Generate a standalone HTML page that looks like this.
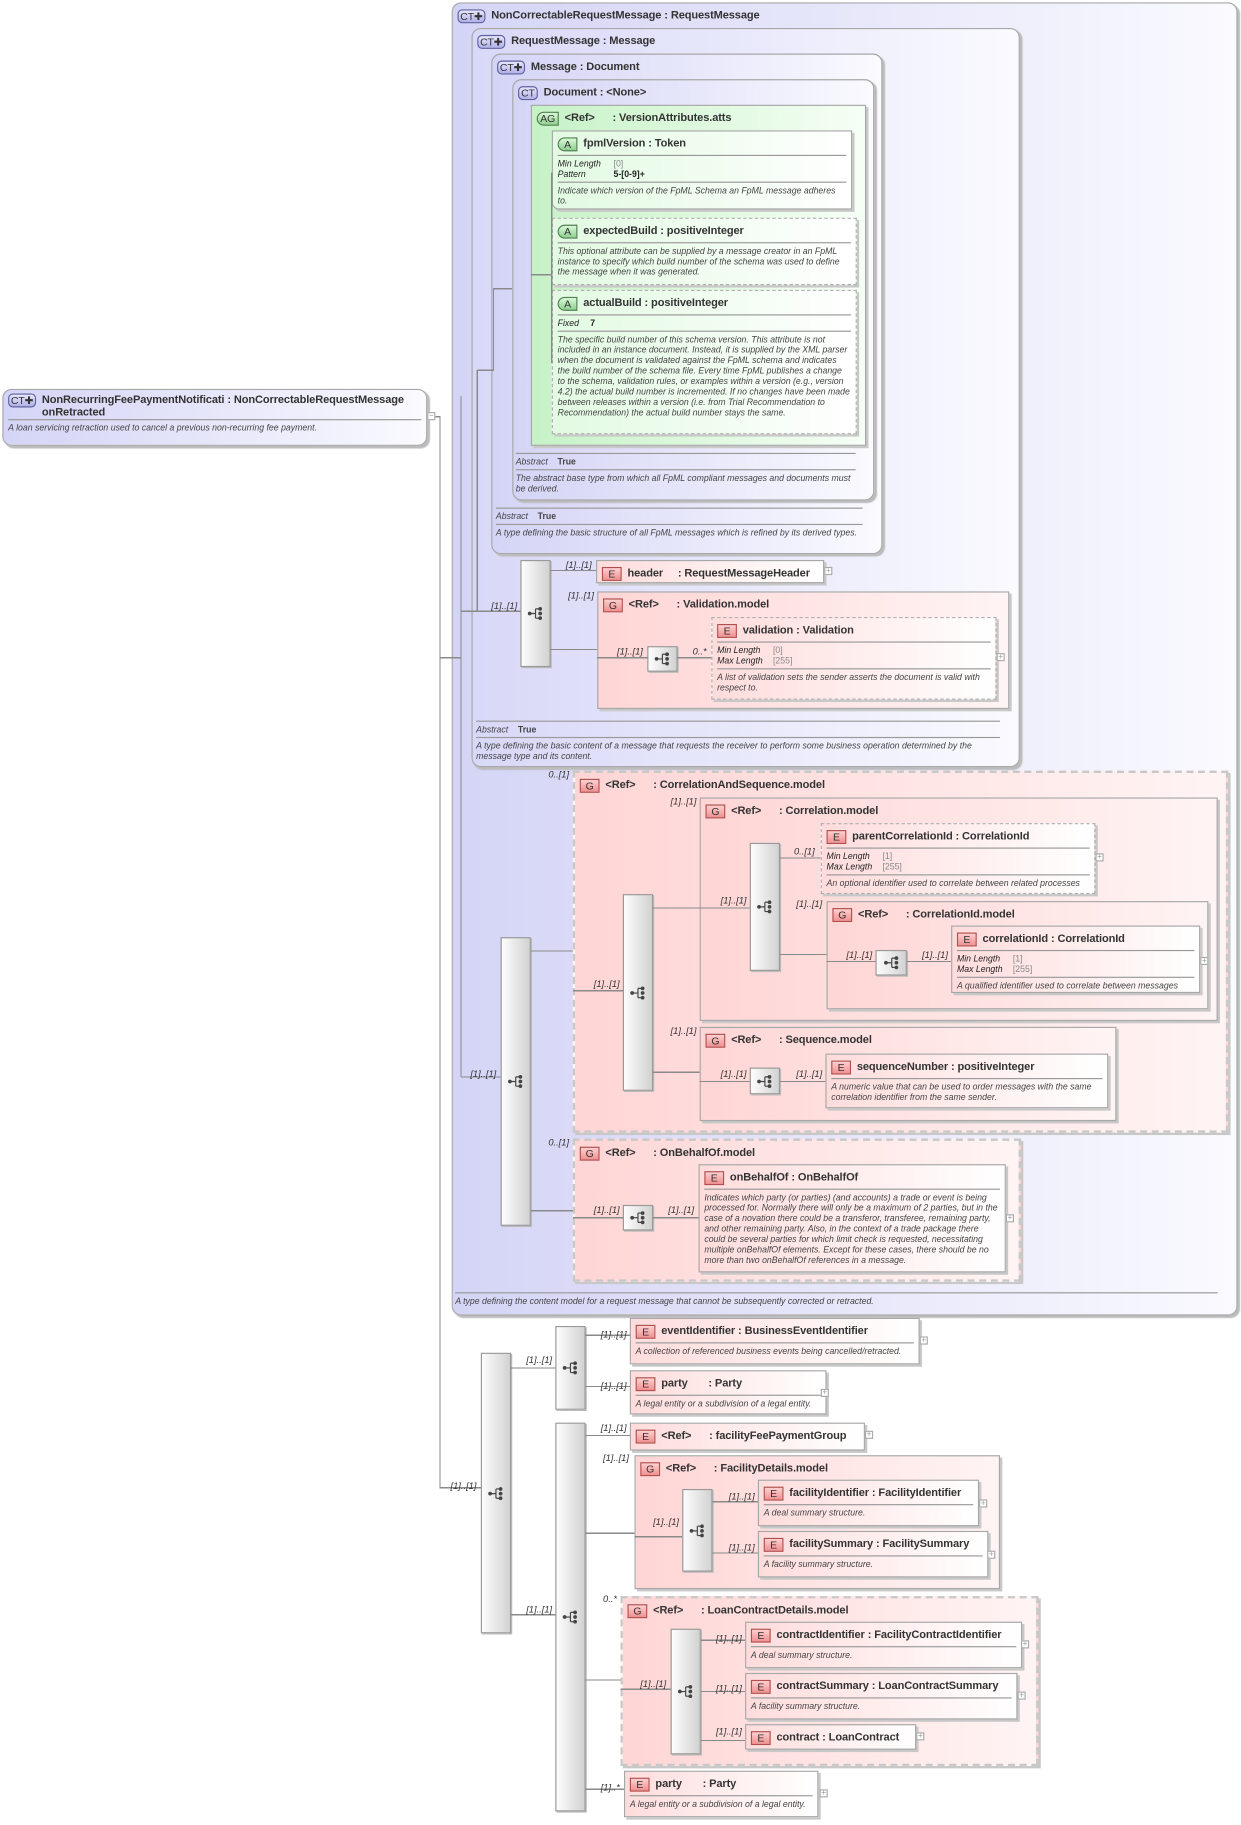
<!DOCTYPE html>
<html><head><meta charset="utf-8">
<style>
html,body{margin:0;padding:0;background:#fff;width:1241px;height:1825px;overflow:hidden}
#w{position:absolute;left:0;top:0;width:1066px;height:1568px;transform:scale(1.16417);transform-origin:0 0;font-family:"Liberation Sans",sans-serif}
.b{position:absolute;box-sizing:border-box;border:1px solid #a8a8a8}
.ct{border-radius:8px;background:linear-gradient(to right,#d4d4f6,#fafaff);box-shadow:2px 2px 1px #bbb}
.g{background:linear-gradient(to right,#ffd5d5,#fff4f4);box-shadow:2px 2px 0 #c8c8c8}
.e{background:linear-gradient(to right,#ffdcdc,#fff);box-shadow:2px 2px 0 #c8c8c8}
.dash{border:1px dashed #b0b0b0}
.ag{background:linear-gradient(to right,#c6f2c6,#f6fff6);box-shadow:2px 2px 0 #c8c8c8}
.at{background:linear-gradient(to right,#e2fae2,#fff);box-shadow:2px 2px 0 #c8c8c8}
.hd{font:bold 9.5px "Liberation Sans",sans-serif;letter-spacing:-0.1px;color:#333;white-space:nowrap;height:17px;line-height:16px;padding:3px 4px 0}
.sep{border-top:1px solid #999;margin:0 4px}
.d{font:italic 7.5px "Liberation Sans",sans-serif;color:#444;line-height:9px;padding:2px 4px}
.p{font:italic 7.5px "Liberation Sans",sans-serif;color:#222;line-height:9px;padding:2px 4px}
.p span{display:inline-block;width:48px}
.p em{font-style:normal;color:#888}
.p b{font-style:normal}
.bd{display:inline-block;box-sizing:border-box;height:12px;line-height:11px;font:9px "Liberation Sans",sans-serif;text-align:center;margin-right:5px;vertical-align:-1px;color:#333}
.bE{width:17px;border:1px solid #b05050;background:linear-gradient(#ffd0d0,#f09090)}
.bA{width:17px;border:1px solid #508050;border-radius:6px 0 0 6px;background:linear-gradient(#d8f8d8,#90d090)}
.bAG{width:19px;border:1px solid #508050;border-radius:6px 0 0 6px;background:linear-gradient(#d8f8d8,#90d090)}
.bCT{width:24px;border:1px solid #6060a0;border-radius:4px;background:linear-gradient(#e8e8ff,#b0b0e8)}
.s{position:absolute;box-sizing:border-box;border:1px solid #999;background:linear-gradient(to right,#fdfdfd,#d2d2d2);box-shadow:1px 1px 0 #bbb}
.s svg{position:absolute;left:50%;top:50%;margin:-6px 0 0 -7px}
.l{position:absolute;font:italic 8px "Liberation Sans",sans-serif;color:#333;white-space:nowrap}
.pl{position:absolute;width:7px;height:7px;box-sizing:border-box;border:1px solid #aaa;background:#fff;font:7px/5px "Liberation Sans";color:#999;text-align:center}
.ft{position:absolute;font:italic 7.5px "Liberation Sans",sans-serif;color:#444;line-height:9px}
.ft hr{border:0;border-top:1px solid #999;margin:0}
</style></head><body><div id="w">
<svg width="0" height="0" style="position:absolute"><defs><g id="ic"><circle cx="2" cy="6" r="1.6" fill="#444"/><line x1="2" y1="6" x2="7" y2="6" stroke="#444"/><line x1="7" y1="2" x2="7" y2="10" stroke="#444"/><line x1="7" y1="2" x2="11" y2="2" stroke="#444"/><line x1="7" y1="10" x2="11" y2="10" stroke="#444"/><circle cx="11" cy="2" r="1.6" fill="#444"/><circle cx="11" cy="6" r="1.6" fill="#444"/><circle cx="11" cy="10" r="1.6" fill="#444"/></g></defs></svg>

<div class="b ct" style="left:388px;top:2px;width:675px;height:1128px"><div class="hd"><i class="bd bCT">CT✚</i>NonCorrectableRequestMessage : RequestMessage</div></div>
<div class="b ct" style="left:405px;top:24px;width:471px;height:635px;background:linear-gradient(to right,#d8d8f8,#fafaff)"><div class="hd"><i class="bd bCT">CT✚</i>RequestMessage : Message</div></div>
<div class="b ct" style="left:422px;top:46px;width:336px;height:430px"><div class="hd"><i class="bd bCT">CT✚</i>Message : Document</div></div>
<div class="b ct" style="left:440px;top:68px;width:311px;height:362px"><div class="hd"><i class="bd bCT" style="width:17px">CT</i>Document : &lt;None&gt;</div></div>
<div class="b ag" style="left:456px;top:90px;width:288px;height:293px;border-radius:0"><div class="hd"><i class="bd bAG">AG</i>&lt;Ref&gt;&nbsp;&nbsp;&nbsp;&nbsp;&nbsp; : VersionAttributes.atts</div></div>
<div class="b at" style="left:474px;top:112px;width:258px;height:68px;border-radius:0 0 0 6px"><div class="hd"><i class="bd bA">A</i>fpmlVersion : Token</div><div class="sep"></div><div class="p"><span>Min Length</span><em>[0]</em><br><span>Pattern</span><b>5-[0-9]+</b></div><div class="sep"></div><div class="d">Indicate which version of the FpML Schema an FpML message adheres to.</div></div>
<div class="b at dash" style="left:474px;top:187px;width:262px;height:58px"><div class="hd"><i class="bd bA">A</i>expectedBuild : positiveInteger</div><div class="sep"></div><div class="d">This optional attribute can be supplied by a message creator in an FpML instance to specify which build number of the schema was used to define the message when it was generated.</div></div>
<div class="b at dash" style="left:474px;top:249px;width:262px;height:124px"><div class="hd"><i class="bd bA">A</i>actualBuild : positiveInteger</div><div class="sep"></div><div class="p"><span style="width:28px">Fixed</span><b>7</b></div><div class="sep"></div><div class="d">The specific build number of this schema version. This attribute is not included in an instance document. Instead, it is supplied by the XML parser when the document is validated against the FpML schema and indicates the build number of the schema file. Every time FpML publishes a change to the schema, validation rules, or examples within a version (e.g., version 4.2) the actual build number is incremented. If no changes have been made between releases within a version (i.e. from Trial Recommendation to Recommendation) the actual build number stays the same.</div></div>

<div class="ft" style="left:443px;top:389px;width:292px"><hr><div style="padding:2px 0"><span>Abstract</span>&nbsp;&nbsp;&nbsp;&nbsp;<b style="font-style:normal">True</b></div><hr><div style="padding-top:2px">The abstract base type from which all FpML compliant messages and documents must be derived.</div></div>
<div class="ft" style="left:426px;top:436px;width:315px"><hr><div style="padding:2px 0"><span>Abstract</span>&nbsp;&nbsp;&nbsp;&nbsp;<b style="font-style:normal">True</b></div><hr><div style="padding-top:2px">A type defining the basic structure of all FpML messages which is refined by its derived types.</div></div>

<div class="s" style="left:447px;top:481px;width:26px;height:92px"><svg width="14" height="12"><use href="#ic"/></svg></div>
<div class="b e" style="left:512px;top:481px;width:196px;height:20px"><div class="hd"><i class="bd bE">E</i>header&nbsp;&nbsp;&nbsp;&nbsp; : RequestMessageHeader</div></div>
<div class="b g" style="left:513px;top:508px;width:354px;height:101px"><div class="hd"><i class="bd bE">G</i>&lt;Ref&gt;&nbsp;&nbsp;&nbsp;&nbsp;&nbsp; : Validation.model</div></div>
<div class="s" style="left:556px;top:555px;width:26px;height:22px"><svg width="14" height="12"><use href="#ic"/></svg></div>
<div class="b e dash" style="left:611px;top:530px;width:245px;height:71px"><div class="hd"><i class="bd bE">E</i>validation : Validation</div><div class="sep"></div><div class="p"><span>Min Length</span><em>[0]</em><br><span>Max Length</span><em>[255]</em></div><div class="sep"></div><div class="d">A list of validation sets the sender asserts the document is valid with respect to.</div></div>
<div class="ft" style="left:409px;top:619px;width:450px"><hr><div style="padding:2px 0"><span>Abstract</span>&nbsp;&nbsp;&nbsp;&nbsp;<b style="font-style:normal">True</b></div><hr><div style="padding-top:2px">A type defining the basic content of a message that requests the receiver to perform some business operation determined by the message type and its content.</div></div>

<div class="s" style="left:430px;top:805px;width:26px;height:248px"><svg width="14" height="12"><use href="#ic"/></svg></div>
<div class="b g dash" style="left:492px;top:662px;width:563px;height:311px;border:2px dashed #c8c8c8"><div class="hd"><i class="bd bE">G</i>&lt;Ref&gt;&nbsp;&nbsp;&nbsp;&nbsp;&nbsp; : CorrelationAndSequence.model</div></div>
<div class="s" style="left:535px;top:768px;width:26px;height:169px"><svg width="14" height="12"><use href="#ic"/></svg></div>
<div class="b g" style="left:601px;top:685px;width:445px;height:192px"><div class="hd"><i class="bd bE">G</i>&lt;Ref&gt;&nbsp;&nbsp;&nbsp;&nbsp;&nbsp; : Correlation.model</div></div>
<div class="s" style="left:644px;top:724px;width:26px;height:110px"><svg width="14" height="12"><use href="#ic"/></svg></div>
<div class="b e dash" style="left:705px;top:707px;width:236px;height:61px"><div class="hd"><i class="bd bE">E</i>parentCorrelationId : CorrelationId</div><div class="sep"></div><div class="p"><span>Min Length</span><em>[1]</em><br><span>Max Length</span><em>[255]</em></div><div class="sep"></div><div class="d">An optional identifier used to correlate between related processes</div></div>
<div class="b g" style="left:710px;top:774px;width:328px;height:93px"><div class="hd"><i class="bd bE">G</i>&lt;Ref&gt;&nbsp;&nbsp;&nbsp;&nbsp;&nbsp; : CorrelationId.model</div></div>
<div class="s" style="left:752px;top:816px;width:27px;height:22px"><svg width="14" height="12"><use href="#ic"/></svg></div>
<div class="b e" style="left:817px;top:795px;width:214px;height:58px"><div class="hd"><i class="bd bE">E</i>correlationId : CorrelationId</div><div class="sep"></div><div class="p"><span>Min Length</span><em>[1]</em><br><span>Max Length</span><em>[255]</em></div><div class="sep"></div><div class="d">A qualified identifier used to correlate between messages</div></div>
<div class="b g" style="left:601px;top:882px;width:358px;height:81px"><div class="hd"><i class="bd bE">G</i>&lt;Ref&gt;&nbsp;&nbsp;&nbsp;&nbsp;&nbsp; : Sequence.model</div></div>
<div class="s" style="left:644px;top:917px;width:26px;height:23px"><svg width="14" height="12"><use href="#ic"/></svg></div>
<div class="b e" style="left:709px;top:905px;width:243px;height:47px"><div class="hd"><i class="bd bE">E</i>sequenceNumber : positiveInteger</div><div class="sep"></div><div class="d">A numeric value that can be used to order messages with the same correlation identifier from the same sender.</div></div>
<div class="b g dash" style="left:492px;top:978px;width:385px;height:123px;border:2px dashed #c8c8c8"><div class="hd"><i class="bd bE">G</i>&lt;Ref&gt;&nbsp;&nbsp;&nbsp;&nbsp;&nbsp; : OnBehalfOf.model</div></div>
<div class="s" style="left:535px;top:1035px;width:26px;height:22px"><svg width="14" height="12"><use href="#ic"/></svg></div>
<div class="b e" style="left:600px;top:1000px;width:264px;height:93px"><div class="hd"><i class="bd bE">E</i>onBehalfOf : OnBehalfOf</div><div class="sep"></div><div class="d">Indicates which party (or parties) (and accounts) a trade or event is being processed for. Normally there will only be a maximum of 2 parties, but in the case of a novation there could be a transferor, transferee, remaining party, and other remaining party. Also, in the context of a trade package there could be several parties for which limit check is requested, necessitating multiple onBehalfOf elements. Except for these cases, there should be no more than two onBehalfOf references in a message.</div></div>
<div class="ft" style="left:391px;top:1110px;width:655px"><hr><div style="padding-top:2px">A type defining the content model for a request message that cannot be subsequently corrected or retracted.</div></div>

<div class="b ct" style="left:2px;top:334px;width:365px;height:49px"><div class="hd" style="line-height:11px;height:22px"><i class="bd bCT" style="vertical-align:top">CT✚</i><span style="display:inline-block;vertical-align:top">NonRecurringFeePaymentNotificati&nbsp;: NonCorrectableRequestMessage<br>onRetracted</span></div><div class="sep"></div><div class="d">A loan servicing retraction used to cancel a previous non-recurring fee payment.</div></div>

<div class="s" style="left:413px;top:1162px;width:26px;height:241px"><svg width="14" height="12"><use href="#ic"/></svg></div>
<div class="s" style="left:477px;top:1139px;width:26px;height:72px"><svg width="14" height="12"><use href="#ic"/></svg></div>
<div class="b e" style="left:541px;top:1132px;width:249px;height:40px"><div class="hd"><i class="bd bE">E</i>eventIdentifier : BusinessEventIdentifier</div><div class="sep"></div><div class="d">A collection of referenced business events being cancelled/retracted.</div></div>
<div class="b e" style="left:541px;top:1177px;width:169px;height:38px"><div class="hd"><i class="bd bE">E</i>party&nbsp;&nbsp;&nbsp;&nbsp;&nbsp;&nbsp; : Party</div><div class="sep"></div><div class="d">A legal entity or a subdivision of a legal entity.</div></div>
<div class="s" style="left:477px;top:1222px;width:26px;height:334px"><svg width="14" height="12"><use href="#ic"/></svg></div>
<div class="b e" style="left:541px;top:1222px;width:202px;height:24px"><div class="hd"><i class="bd bE">E</i>&lt;Ref&gt;&nbsp;&nbsp;&nbsp;&nbsp;&nbsp; : facilityFeePaymentGroup</div></div>
<div class="b g" style="left:545px;top:1250px;width:314px;height:115px"><div class="hd"><i class="bd bE">G</i>&lt;Ref&gt;&nbsp;&nbsp;&nbsp;&nbsp;&nbsp; : FacilityDetails.model</div></div>
<div class="s" style="left:586px;top:1279px;width:26px;height:71px"><svg width="14" height="12"><use href="#ic"/></svg></div>
<div class="b e" style="left:651px;top:1271px;width:190px;height:40px"><div class="hd"><i class="bd bE">E</i>facilityIdentifier : FacilityIdentifier</div><div class="sep"></div><div class="d">A deal summary structure.</div></div>
<div class="b e" style="left:651px;top:1315px;width:198px;height:40px"><div class="hd"><i class="bd bE">E</i>facilitySummary : FacilitySummary</div><div class="sep"></div><div class="d">A facility summary structure.</div></div>
<div class="b g dash" style="left:533px;top:1371px;width:359px;height:146px;border:2px dashed #c8c8c8"><div class="hd"><i class="bd bE">G</i>&lt;Ref&gt;&nbsp;&nbsp;&nbsp;&nbsp;&nbsp; : LoanContractDetails.model</div></div>
<div class="s" style="left:576px;top:1399px;width:26px;height:108px"><svg width="14" height="12"><use href="#ic"/></svg></div>
<div class="b e" style="left:640px;top:1393px;width:238px;height:40px"><div class="hd"><i class="bd bE">E</i>contractIdentifier : FacilityContractIdentifier</div><div class="sep"></div><div class="d">A deal summary structure.</div></div>
<div class="b e" style="left:640px;top:1437px;width:234px;height:40px"><div class="hd"><i class="bd bE">E</i>contractSummary : LoanContractSummary</div><div class="sep"></div><div class="d">A facility summary structure.</div></div>
<div class="b e" style="left:640px;top:1481px;width:147px;height:22px"><div class="hd"><i class="bd bE">E</i>contract : LoanContract</div></div>
<div class="b e" style="left:536px;top:1521px;width:167px;height:40px"><div class="hd"><i class="bd bE">E</i>party&nbsp;&nbsp;&nbsp;&nbsp;&nbsp;&nbsp; : Party</div><div class="sep"></div><div class="d">A legal entity or a subdivision of a legal entity.</div></div>

<div class="pl" style="left:367px;top:354px">−</div>
<div class="pl" style="left:708px;top:487px">+</div>
<div class="pl" style="left:856px;top:561px">+</div>
<div class="pl" style="left:941px;top:733px">+</div>
<div class="pl" style="left:1031px;top:822px">+</div>
<div class="pl" style="left:864px;top:1043px">+</div>
<div class="pl" style="left:790px;top:1148px">+</div>
<div class="pl" style="left:705px;top:1193px">+</div>
<div class="pl" style="left:743px;top:1229px">+</div>
<div class="pl" style="left:841px;top:1288px">+</div>
<div class="pl" style="left:848px;top:1332px">+</div>
<div class="pl" style="left:877px;top:1409px">+</div>
<div class="pl" style="left:874px;top:1453px">+</div>
<div class="pl" style="left:787px;top:1488px">+</div>
<div class="pl" style="left:704px;top:1537px">+</div>

<svg style="position:absolute;left:0;top:0" width="1066" height="1568"><g stroke="#8a8a8a" stroke-width="1" fill="none" shape-rendering="crispEdges">
<path d="M374 358H378V1278H413"/>
<path d="M378 565H388"/>
<path d="M388 565H396V340 M396 925H430 M396 340V925"/>
<path d="M396 525H410V318 M410 525H447"/>
<path d="M410 318H424V248H440"/>
<path d="M456 236H474V148 M474 236V312"/>
<path d="M473 490H512 M473 558H513"/>
<path d="M513 565H556 M582 565H611"/>
<path d="M456 817H492 M456 1040H492"/>
<path d="M492 851H535 M561 780H601 M561 921H601"/>
<path d="M601 780H644 M670 737H705 M670 820H710"/>
<path d="M710 826H752 M779 826H817"/>
<path d="M601 929H644 M670 929H709"/>
<path d="M492 1046H535 M561 1046H600"/>
<path d="M439 1175H477 M439 1387H477"/>
<path d="M503 1147H541 M503 1191H541 M503 1233H541 M503 1317H545 M503 1443H533 M503 1537H536"/>
<path d="M545 1320H586 M612 1290H651 M612 1334H651"/>
<path d="M533 1451H576 M602 1409H640 M602 1453H640 M602 1495H640"/>
</g></svg>

<div class="l" style="left:486px;top:481px">[1]..[1]</div>
<div class="l" style="left:488px;top:507px">[1]..[1]</div>
<div class="l" style="left:422px;top:516px">[1]..[1]</div>
<div class="l" style="left:530px;top:555px">[1]..[1]</div>
<div class="l" style="left:595px;top:555px">0..*</div>
<div class="l" style="left:471px;top:661px">0..[1]</div>
<div class="l" style="left:576px;top:684px">[1]..[1]</div>
<div class="l" style="left:682px;top:727px">0..[1]</div>
<div class="l" style="left:619px;top:769px">[1]..[1]</div>
<div class="l" style="left:684px;top:772px">[1]..[1]</div>
<div class="l" style="left:727px;top:816px">[1]..[1]</div>
<div class="l" style="left:792px;top:816px">[1]..[1]</div>
<div class="l" style="left:510px;top:841px">[1]..[1]</div>
<div class="l" style="left:576px;top:881px">[1]..[1]</div>
<div class="l" style="left:619px;top:918px">[1]..[1]</div>
<div class="l" style="left:684px;top:918px">[1]..[1]</div>
<div class="l" style="left:404px;top:918px">[1]..[1]</div>
<div class="l" style="left:471px;top:977px">0..[1]</div>
<div class="l" style="left:510px;top:1035px">[1]..[1]</div>
<div class="l" style="left:574px;top:1035px">[1]..[1]</div>
<div class="l" style="left:516px;top:1142px">[1]..[1]</div>
<div class="l" style="left:452px;top:1164px">[1]..[1]</div>
<div class="l" style="left:516px;top:1186px">[1]..[1]</div>
<div class="l" style="left:516px;top:1222px">[1]..[1]</div>
<div class="l" style="left:518px;top:1248px">[1]..[1]</div>
<div class="l" style="left:387px;top:1272px">[1]..[1]</div>
<div class="l" style="left:626px;top:1281px">[1]..[1]</div>
<div class="l" style="left:561px;top:1303px">[1]..[1]</div>
<div class="l" style="left:626px;top:1325px">[1]..[1]</div>
<div class="l" style="left:518px;top:1369px">0..*</div>
<div class="l" style="left:452px;top:1378px">[1]..[1]</div>
<div class="l" style="left:615px;top:1403px">[1]..[1]</div>
<div class="l" style="left:550px;top:1442px">[1]..[1]</div>
<div class="l" style="left:615px;top:1446px">[1]..[1]</div>
<div class="l" style="left:615px;top:1483px">[1]..[1]</div>
<div class="l" style="left:516px;top:1531px">[1]..*</div>
</div></body></html>
